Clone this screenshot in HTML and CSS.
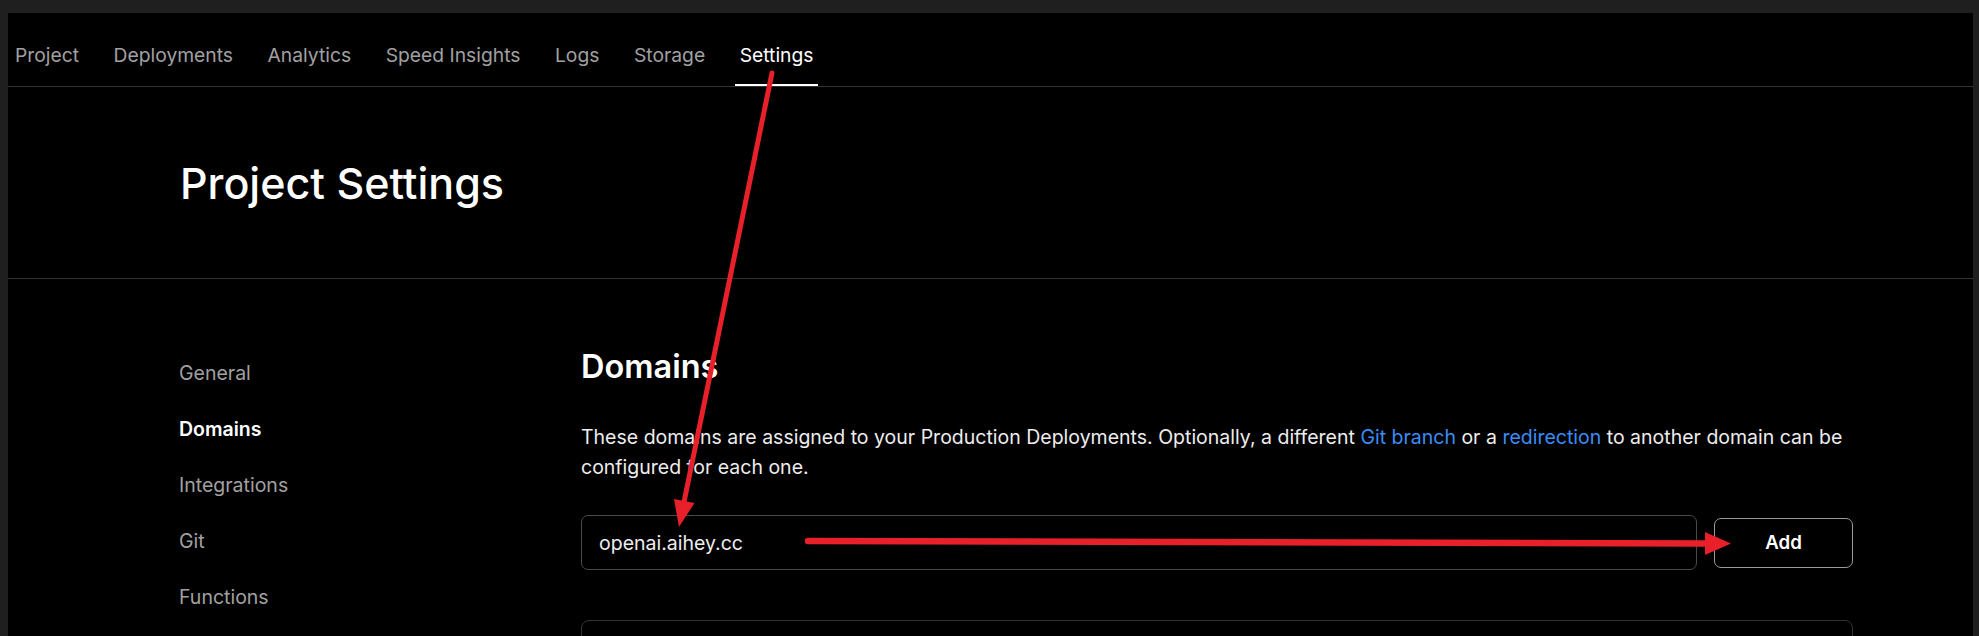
FILE: index.html
```html
<!DOCTYPE html>
<html lang="en">
<head>
    <meta charset="UTF-8">
    <title>Project Settings</title>
    <link rel="stylesheet" href="styles.css">
</head>
<body>

<div class="window">
    <nav class="tabs">
        <a class="tab">Project</a>
        <a class="tab">Deployments</a>
        <a class="tab">Analytics</a>
        <a class="tab">Speed Insights</a>
        <a class="tab">Logs</a>
        <a class="tab">Storage</a>
        <a class="tab active">Settings</a>
    </nav>

    <header class="page-head">
        <h1>Project Settings</h1>
    </header>

    <main class="settings">
        <ul class="side">
            <li>General</li>
            <li class="active">Domains</li>
            <li>Integrations</li>
            <li>Git</li>
            <li>Functions</li>
        </ul>

        <section class="content">
            <h2>Domains</h2>
            <p>These domains are assigned to your Production Deployments. Optionally, a different <a href="#">Git branch</a> or a <a href="#">redirection</a> to another domain can be configured for each one.</p>
            <div class="add-row">
                <input type="text" value="openai.aihey.cc">
                <button>Add</button>
            </div>
            <div class="card"></div>
        </section>
    </main>
</div>

<!-- red annotation arrows drawn over the screenshot -->
<svg class="marks" width="1979" height="636" viewBox="0 0 1979 636">
    <line x1="772" y1="73" x2="684" y2="502" stroke="#e8202a" stroke-width="5" stroke-linecap="round"/>
    <polygon points="694.5,503 679,527 674,499" fill="#e8202a"/>
    <line x1="808" y1="541" x2="1708" y2="543.5" stroke="#e8202a" stroke-width="6.5" stroke-linecap="round"/>
    <polygon points="1705,532 1731,543.5 1705,555" fill="#e8202a"/>
</svg>

</body>
</html>
```

FILE: styles.css
```css
body {
    margin: 0;
    background: #1f1f1f;
    font-family: Inter, "Noto Sans", sans-serif;
    color: #ededed;
    height: 636px;
    overflow: hidden;
}
.window {
    margin: 13px 6px 0 8px;
    background: #000;
    height: 623px;
    overflow: hidden;
}
.tabs {
    display: flex;
    gap: 24.5px;
    height: 73px;
    padding-left: 2px;
    border-bottom: 1px solid #333;
}
.tab {
    display: flex;
    align-items: center;
    padding: 10px 5px 0;
    font-size: 19.3px;
    color: #a1a1a1;
}
.tab.active {
    color: #fff;
    box-shadow: inset 0 -2px 0 #fff;
}
.page-head {
    height: 191px;
    display: flex;
    align-items: center;
    padding-left: 172px;
    border-bottom: 1px solid #333;
}
h1 {
    margin: 0;
    font-size: 43px;
    font-weight: 500;
    color: #fff;
}
.settings {
    display: flex;
    padding: 66px 0 0 171px;
}
.side {
    list-style: none;
    margin: 0;
    padding: 0;
    width: 402px;
    flex-shrink: 0;
}
.side li {
    height: 56px;
    line-height: 56px;
    font-size: 19.5px;
    color: #a1a1a1;
}
.side li.active {
    color: #fff;
    font-weight: 600;
}
.content {
    width: 1272px;
}
h2 {
    margin: 2px 0 0;
    font-size: 32.5px;
    line-height: 40px;
    font-weight: 600;
    color: #fff;
}
p {
    margin: 35px 0 0;
    font-size: 19.5px;
    line-height: 30px;
}
p a {
    color: #3b8cf6;
    text-decoration: none;
}
.add-row {
    display: flex;
    align-items: center;
    gap: 17px;
    margin-top: 33px;
}
input {
    flex: 1;
    height: 55px;
    box-sizing: border-box;
    padding: 0 17px;
    background: #000;
    border: 1px solid #4a4a4a;
    border-radius: 7px;
    color: #ededed;
    font-family: inherit;
    font-size: 19.5px;
}
button {
    width: 139px;
    height: 50px;
    background: #000;
    border: 1px solid #9a9a9a;
    border-radius: 7px;
    color: #fff;
    font-family: inherit;
    font-size: 18.7px;
    font-weight: 600;
}
.card {
    margin-top: 50px;
    height: 200px;
    border: 1px solid #333;
    border-radius: 8px;
}
.marks {
    position: absolute;
    left: 0;
    top: 0;
    pointer-events: none;
}
```
